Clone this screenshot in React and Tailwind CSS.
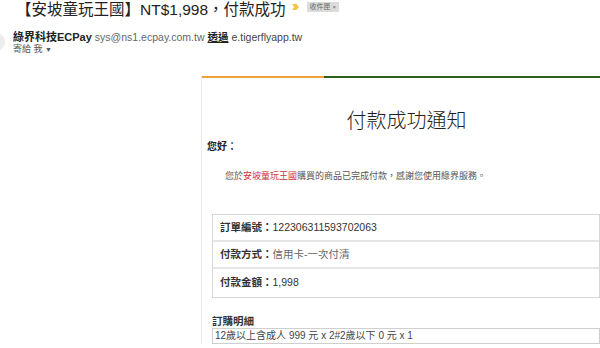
const SANS = { fontFamily: '"Liberation Sans", "Noto Sans CJK TC", sans-serif' };

const ROWS = [
  { label: '訂單編號：', value: '122306311593702063', dark: true, h: 'h-[27px] border-b-2 border-[#e6e6e6]' },
  { label: '付款方式：', value: '信用卡-一次付清', dark: false, h: 'h-[27px] border-b-2 border-[#e6e6e6]' },
  { label: '付款金額：', value: '1,998', dark: true, h: 'h-[28px]' },
];

function Header() {
  return (
    <div className="pl-[16px]">
      <div className="flex items-center h-[20px]">
        <h1 className="text-[15.5px] leading-[20px] text-[#222] font-normal whitespace-nowrap">
          【安坡童玩王國】NT$1,998，付款成功
        </h1>
        <svg width="7" height="6" viewBox="0 0 8 7" className="ml-[6px] mt-[-7px]">
          <path d="M0 0 H5 L8 3.5 L5 7 H0 L2.5 3.5 Z" fill="#f5c542" />
        </svg>
        <span className="ml-[8px] mt-[-7px] h-[10px] px-[3px] bg-[#dcdcdc] text-[#666] text-[7px] leading-[10px] flex items-center gap-[2px]">
          收件匣 <span className="text-[6px]">×</span>
        </span>
      </div>
    </div>
  );
}

function Sender() {
  return (
    <div className="flex mt-[11px]">
      <div className="w-[36px] h-[18px] -ml-[31px] mt-[2px] rounded-full bg-[#ececec]" />
      <div className="ml-[8px]">
        <div className="flex items-baseline gap-[3px] text-[11px] leading-[13px] whitespace-nowrap">
          <span className="font-bold text-[#222]">綠界科技ECPay</span>
          <span className="text-[#666] text-[10.5px]">sys@ns1.ecpay.com.tw</span>
          <span className="font-bold text-[#222] underline text-[10.5px]">透過</span>
          <span className="text-[#444] text-[10.5px]">e.tigerflyapp.tw</span>
        </div>
        <div className="text-[9px] leading-[12px] text-[#555] mt-[-1px]">
          寄給 我 <span className="text-[7px]">▼</span>
        </div>
      </div>
    </div>
  );
}

function Body() {
  return (
    <div className="w-[410px] shrink-0 border-l border-[#ececec] flex flex-col">
      <div className="flex h-[2px]">
        <div className="w-[122px] bg-[#f0a23a]" />
        <div className="flex-1 bg-[#2f5f1c]" />
      </div>
      <div className="text-center text-[20px] leading-[24px] font-light text-[#222] mt-[31px]">
        付款成功通知
      </div>
      <div className="pl-[5px] mt-[7px] text-[10px] leading-[14px] font-bold text-[#222]">您好：</div>
      <div className="pl-[23px] mt-[16px] text-[9px] leading-[12px] text-[#555] whitespace-nowrap">
        您於<span className="text-[#d0343a]">安坡童玩王國</span>購買的商品已完成付款，感謝您使用綠界服務。
      </div>
      <div className="ml-[10px] mt-[32px] w-[388px] border border-[#d6d6d6] flex flex-col">
        {ROWS.map((r) => (
          <div key={r.label} className={`flex items-center px-[7px] text-[10.5px] ${r.h}`}>
            <span className="font-bold text-[#333]">{r.label}</span>
            <span className={r.dark ? 'text-[#333]' : 'text-[#666]'}>{r.value}</span>
          </div>
        ))}
      </div>
      <div className="ml-[10px] mt-[16px] text-[10.5px] leading-[14px] font-bold text-[#333]">訂購明細</div>
      <div className="ml-[10px] w-[388px] h-[16px] border border-[#cfcfcf] px-[2px] text-[10px] leading-[14px] text-[#444] whitespace-nowrap">
        12歲以上含成人 999 元 x 2#2歲以下 0 元 x 1
      </div>
    </div>
  );
}

export default function App() {
  return (
    <div className="w-[600px] h-[348px] overflow-hidden bg-white" style={SANS}>
      <Header />
      <Sender />
      <div className="flex mt-[20px]">
        <div className="w-[201px] shrink-0" />
        <Body />
      </div>
    </div>
  );
}
